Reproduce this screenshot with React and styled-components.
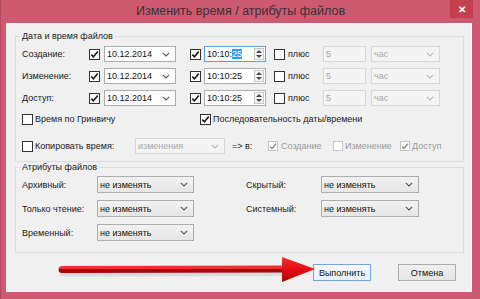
import React from "react";
import styled, { createGlobalStyle } from "styled-components";

const Global = createGlobalStyle`
  html, body { margin: 0; padding: 0; background: #cd5a70; }
  body { width: 480px; height: 299px; overflow: hidden; font-family: "Liberation Sans", Arial, sans-serif; font-size: 9px; color: #1a1a1a; }
  * { box-sizing: border-box; }
`;

const Window = styled.div`
  position: relative;
  width: 480px;
  height: 299px;
  background: #cd5a70;
  border-left: 1px solid #b44a5f;
  display: flex;
  flex-direction: column;
`;

const TitleBar = styled.div`
  height: 23px;
  display: grid;
  grid-template-columns: 1fr auto 1fr;
  align-items: start;
`;

const Title = styled.div`
  grid-column: 2;
  font-size: 12.5px;
  line-height: 22px;
  color: #3a3034;
`;

const CloseButton = styled.div`
  grid-column: 3;
  justify-self: end;
  margin-right: 7px;
  width: 23px;
  height: 18px;
  background: #c4404f;
  color: #fff;
  font-size: 10px;
  font-weight: bold;
  display: flex;
  align-items: center;
  justify-content: center;
`;

const Client = styled.div`
  flex: 1;
  margin: 0 8px 7px 5px;
  background: #f0f0f0;
  border: 1px solid #f7f7f7;
  padding: 7px 7px 0 8px;
  display: flex;
  flex-direction: column;
`;

const Group = styled.fieldset`
  margin: ${(p) => p.$mt || 0}px 0 0 0;
  border: 1px solid #dcdcdc;
  padding: ${(p) => p.$pt}px 6px ${(p) => p.$pb}px 6px;
  min-width: 0;
`;

const GroupTitle = styled.legend`
  padding: 0 2px;
  margin-left: -2px;
  font-size: 9px;
  line-height: 10px;
  color: #1a1a1a;
`;

const Rows = styled.div`
  display: flex;
  flex-direction: column;
`;

const Row = styled.div`
  display: flex;
  align-items: center;
  height: ${(p) => p.$h || 16}px;
  margin-top: ${(p) => p.$mt || 0}px;
`;

const Label = styled.span`
  width: ${(p) => p.$w}px;
  flex: none;
  white-space: nowrap;
  color: ${(p) => (p.$disabled ? "#9a9a9a" : "#1a1a1a")};
  margin-left: ${(p) => p.$ml || 0}px;
`;

const Box = styled.span`
  flex: none;
  width: ${(p) => p.$size || 11}px;
  height: ${(p) => p.$size || 11}px;
  margin-left: ${(p) => p.$ml || 0}px;
  background: #fff;
  border: 1px solid ${(p) => (p.$disabled ? "#c4c4c4" : "#333")};
  display: flex;
  align-items: center;
  justify-content: center;
`;

const Check = ({ checked, disabled, ml, size }) => (
  <Box $disabled={disabled} $ml={ml} $size={size}>
    {checked && (
      <svg width="9" height="9" viewBox="0 0 9 9">
        <path d="M1.3 4.6 L3.4 6.8 L7.8 1.4" fill="none" stroke={disabled ? "#8a8a8a" : "#1b1b1b"} strokeWidth="1.6" />
      </svg>
    )}
  </Box>
);

const ComboBox = styled.div`
  flex: none;
  width: ${(p) => p.$w}px;
  height: ${(p) => p.$h || 16}px;
  margin-left: ${(p) => p.$ml || 0}px;
  border: 1px solid ${(p) => (p.$variant === "disabled" ? "#d9d9d9" : "#acacac")};
  background: ${(p) =>
    p.$variant === "gray"
      ? "linear-gradient(#f2f2f2, #e6e6e6)"
      : p.$variant === "disabled"
      ? "#f4f4f4"
      : "#fff"};
  color: ${(p) => (p.$variant === "disabled" ? "#a8a8a8" : "#111")};
  display: flex;
  align-items: center;
  padding: 0 5px 0 2px;
  justify-content: space-between;
`;

const Chevron = ({ disabled }) => (
  <svg width="8" height="5" viewBox="0 0 8 5">
    <path d="M0.8 0.8 L4 4 L7.2 0.8" fill="none" stroke={disabled ? "#b9b9b9" : "#555"} strokeWidth="1.1" />
  </svg>
);

const Combo = ({ w, h, ml, variant, children }) => (
  <ComboBox $w={w} $h={h} $ml={ml} $variant={variant}>
    <span>{children}</span>
    <Chevron disabled={variant === "disabled"} />
  </ComboBox>
);

const FieldBox = styled.div`
  flex: none;
  width: ${(p) => p.$w}px;
  height: 16px;
  margin-left: ${(p) => p.$ml || 0}px;
  border: 1px solid ${(p) => (p.$focused ? "#5a9fe0" : p.$disabled ? "#d9d9d9" : "#acacac")};
  background: ${(p) => (p.$disabled ? "#f4f4f4" : "#fff")};
  color: ${(p) => (p.$disabled ? "#a8a8a8" : "#111")};
  display: flex;
  align-items: center;
  padding-left: 2px;
`;

const Selected = styled.span`
  background: #3399ff;
  color: #fff;
`;

const Spin = styled.div`
  margin-left: auto;
  margin-right: 1px;
  width: 10px;
  height: 12px;
  border: 1px solid #c8c8c8;
  background: #f4f4f4;
  display: flex;
  flex-direction: column;
  align-items: center;
  justify-content: space-around;
`;

const SpinArrow = ({ up }) => (
  <svg width="6" height="3" viewBox="0 0 6 3">
    <path d={up ? "M0 3 L3 0 L6 3 Z" : "M0 0 L3 3 L6 0 Z"} fill="#444" />
  </svg>
);

const TimeField = ({ focused }) => (
  <FieldBox $w={62} $ml={3} $focused={focused}>
    <span>
      10:10:{focused ? <Selected>25</Selected> : "25"}
    </span>
    <Spin>
      <SpinArrow up />
      <SpinArrow />
    </Spin>
  </FieldBox>
);

const PlusCell = styled.div`
  flex: none;
  width: 49px;
  margin-left: 8px;
  display: flex;
  align-items: center;
  gap: 3px;
`;

const AttrGrid = styled.div`
  display: grid;
  grid-template-columns: 75px 97px 52px 75px 98px;
  grid-auto-rows: 17px;
  row-gap: 7px;
  align-items: center;
`;

const Footer = styled.div`
  display: flex;
  justify-content: flex-end;
  gap: 27px;
  padding: 11px 8px 0 0;
`;

const Button = styled.div`
  width: 58px;
  height: 17px;
  border: 1px solid ${(p) => (p.$primary ? "#6fa8dc" : "#acacac")};
  background: ${(p) => (p.$primary ? "linear-gradient(#f6f9fd, #e8f0f8)" : "linear-gradient(#f0f0f0, #e4e4e4)")};
  display: flex;
  align-items: center;
  justify-content: center;
  color: #111;
`;

const ArrowOverlay = styled.svg`
  position: absolute;
  left: 50px;
  top: 250px;
  pointer-events: none;
`;

const dateRows = [
  { label: "Создание:", focused: true },
  { label: "Изменение:" },
  { label: "Доступ:" },
];

const leftAttrs = ["Архивный:", "Только чтение:", "Временный:"];
const rightAttrs = ["Скрытый:", "Системный:"];

export default function App() {
  return (
    <>
      <Global />
      <Window>
        <TitleBar>
          <Title>Изменить время / атрибуты файлов</Title>
          <CloseButton>✕</CloseButton>
        </TitleBar>
        <Client>
          <Group $pt={5} $pb={7}>
            <GroupTitle>Дата и время файлов</GroupTitle>
            <Rows>
              {dateRows.map((r, i) => (
                <Row key={r.label} $mt={i ? 6 : 0}>
                  <Label $w={67}>{r.label}</Label>
                  <Check checked />
                  <Combo w={72} ml={4}>10.12.2014</Combo>
                  <Check checked ml={14} />
                  <TimeField focused={r.focused} />
                  <PlusCell>
                    <Check />
                    <span>плюс</span>
                  </PlusCell>
                  <FieldBox $w={43} $ml={0} $disabled>5</FieldBox>
                  <Combo w={69} ml={5} variant="disabled">час</Combo>
                </Row>
              ))}
              <Row $mt={5}>
                <Check />
                <Label $w={165} $ml={2}>Время по Гринвичу</Label>
                <Check checked />
                <Label $w={160} $ml={2}>Последовательность даты/времени</Label>
              </Row>
              <Row $mt={11}>
                <Check />
                <Label $w={100} $ml={2}>Копировать время:</Label>
                <Combo w={90} variant="disabled">изменения</Combo>
                <Label $w={36} $ml={7}>=&gt; в:</Label>
                <Check checked disabled size={10} />
                <Label $w={52} $ml={3} $disabled>Создание</Label>
                <Check disabled size={10} />
                <Label $w={55} $ml={2} $disabled>Изменение</Label>
                <Check checked disabled size={10} />
                <Label $w={40} $ml={2} $disabled>Доступ</Label>
              </Row>
            </Rows>
          </Group>
          <Group $mt={0} $pt={4} $pb={11}>
            <GroupTitle>Атрибуты файлов</GroupTitle>
            <AttrGrid>
              {leftAttrs.map((l, i) => (
                <React.Fragment key={l}>
                  <span>{l}</span>
                  <Combo w={97} h={17} variant="gray">не изменять</Combo>
                  <span />
                  {rightAttrs[i] ? <span>{rightAttrs[i]}</span> : <span />}
                  {rightAttrs[i] ? <Combo w={98} h={17} variant="gray">не изменять</Combo> : <span />}
                </React.Fragment>
              ))}
            </AttrGrid>
          </Group>
          <Footer>
            <Button $primary>Выполнить</Button>
            <Button>Отмена</Button>
          </Footer>
        </Client>
        <ArrowOverlay width="270" height="40" viewBox="0 0 270 40">
          <defs>
            <linearGradient id="arrowGrad" x1="0" y1="0" x2="0" y2="1">
              <stop offset="0" stopColor="#f03030" />
              <stop offset="0.5" stopColor="#e50d12" />
              <stop offset="1" stopColor="#a80808" />
            </linearGradient>
          </defs>
          <line x1="11" y1="20.5" x2="238" y2="20" stroke="#c8c8c8" strokeWidth="8" strokeLinecap="round" opacity="0.5" transform="translate(1 2)" />
          <line x1="11" y1="19.5" x2="240" y2="19" stroke="url(#arrowGrad)" strokeWidth="7" strokeLinecap="round" />
          <polygon points="231,7 264,19 231,32" fill="url(#arrowGrad)" />
        </ArrowOverlay>
      </Window>
    </>
  );
}
